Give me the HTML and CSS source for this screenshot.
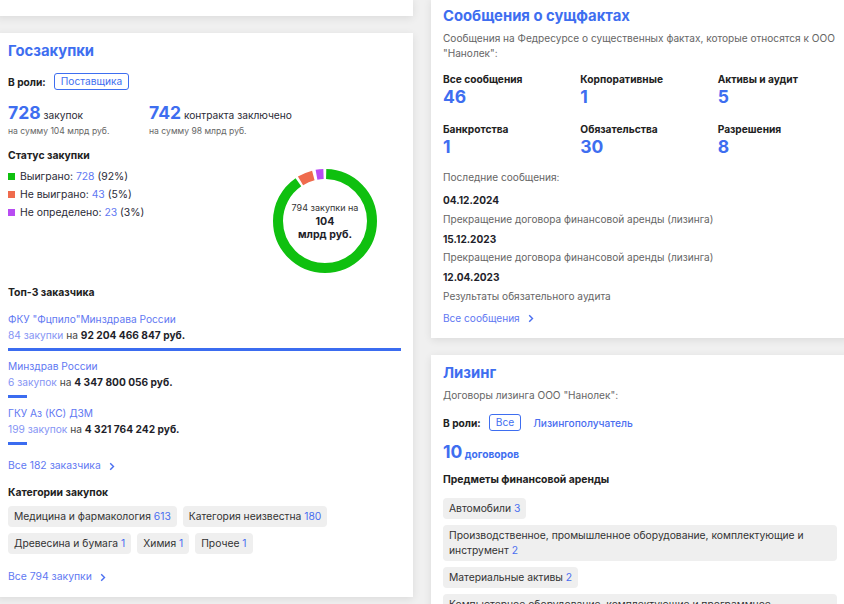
FILE: index.html
```html
<!DOCTYPE html>
<html lang="ru">
  <head>
    <meta charset="UTF-8" />
    <meta name="viewport" content="width=device-width, initial-scale=1.0" />
    <title>Нанолек</title>
    <link rel="stylesheet" href="styles.css">
  </head>
  <body>
    <main class="page">
      <div class="col col_left">
        <section class="card stub">
          <a class="peek" href="#">Все проверки</a>
        </section>

        <section class="card">
          <h2 class="card_title">Госзакупки</h2>
          <div class="role">
            <b>В роли:</b>
            <span class="badge">Поставщика</span>
          </div>
          <div class="stats">
            <div>
              <p class="stat"><span class="stat_num">728</span> закупок</p>
              <p class="stat_sub">на сумму 104 млрд руб.</p>
            </div>
            <div>
              <p class="stat"><span class="stat_num">742</span> контракта заключено</p>
              <p class="stat_sub">на сумму 98 млрд руб.</p>
            </div>
          </div>

          <div class="status">
            <div>
              <h3 class="subhead">Статус закупки</h3>
              <ul class="legend">
                <li><i class="sq sq_win"></i><span>Выиграно: <a href="#">728</a> (92%)</span></li>
                <li><i class="sq sq_lost"></i><span>Не выиграно: <a href="#">43</a> (5%)</span></li>
                <li><i class="sq sq_none"></i><span>Не определено: <a href="#">23</a> (3%)</span></li>
              </ul>
            </div>
            <div class="donut">
              <svg width="104" height="104" viewBox="0 0 104 104">
                <g transform="rotate(-90 52 52)" fill="none" stroke-width="10">
                  <circle cx="52" cy="52" r="47" stroke="#0fc00f" stroke-dasharray="265.4 295.3" stroke-dashoffset="-1.2" />
                  <circle cx="52" cy="52" r="47" stroke="#ef6b4d" stroke-dasharray="13.9 295.3" stroke-dashoffset="-269.1" />
                  <circle cx="52" cy="52" r="47" stroke="#b84cf2" stroke-dasharray="7 295.3" stroke-dashoffset="-286.3" />
                </g>
              </svg>
              <div class="donut_text">
                <span>794 закупки на</span>
                <b>104<br />млрд руб.</b>
              </div>
            </div>
          </div>

          <h3 class="subhead top3">Топ-3 заказчика</h3>
          <ul class="customers">
            <li>
              <a class="cust_name" href="#">ФКУ "Фцпило"Минздрава России</a>
              <p class="cust_sum"><a href="#">84 закупки</a> на <b>92 204 466 847 руб.</b></p>
              <div class="bar" style="width: 100%"></div>
            </li>
            <li>
              <a class="cust_name" href="#">Минздрав России</a>
              <p class="cust_sum"><a href="#">6 закупок</a> на <b>4 347 800 056 руб.</b></p>
              <div class="bar" style="width: 19px"></div>
            </li>
            <li>
              <a class="cust_name" href="#">ГКУ Аз (КС) ДЗМ</a>
              <p class="cust_sum"><a href="#">199 закупок</a> на <b>4 321 764 242 руб.</b></p>
              <div class="bar" style="width: 19px"></div>
            </li>
          </ul>
          <a class="more" href="#">Все 182 заказчика
            <svg width="6" height="9" viewBox="0 0 6 9"><path d="M1.2 1.2 4.5 4.5 1.2 7.8" /></svg>
          </a>

          <h3 class="subhead cats_head">Категории закупок</h3>
          <div class="chips">
            <span class="chip">Медицина и фармакология <em>613</em></span>
            <span class="chip">Категория неизвестна <em>180</em></span>
            <span class="chip">Древесина и бумага <em>1</em></span>
            <span class="chip">Химия <em>1</em></span>
            <span class="chip">Прочее <em>1</em></span>
          </div>
          <a class="more more_last" href="#">Все 794 закупки
            <svg width="6" height="9" viewBox="0 0 6 9"><path d="M1.2 1.2 4.5 4.5 1.2 7.8" /></svg>
          </a>
        </section>
      </div>

      <div class="col col_right">
        <section class="card">
          <h2 class="card_title">Сообщения о сущфактах</h2>
          <p class="desc">Сообщения на Федресурсе о существенных фактах, которые относятся к ООО "Нанолек":</p>
          <div class="facts">
            <div><p class="fact_label">Все сообщения</p><p class="fact_num">46</p></div>
            <div><p class="fact_label">Корпоративные</p><p class="fact_num">1</p></div>
            <div><p class="fact_label">Активы и аудит</p><p class="fact_num">5</p></div>
            <div><p class="fact_label">Банкротства</p><p class="fact_num">1</p></div>
            <div><p class="fact_label">Обязательства</p><p class="fact_num">30</p></div>
            <div><p class="fact_label">Разрешения</p><p class="fact_num">8</p></div>
          </div>
          <p class="desc last_head">Последние сообщения:</p>
          <ul class="messages">
            <li><b>04.12.2024</b><p class="desc">Прекращение договора финансовой аренды (лизинга)</p></li>
            <li><b>15.12.2023</b><p class="desc">Прекращение договора финансовой аренды (лизинга)</p></li>
            <li><b>12.04.2023</b><p class="desc">Результаты обязательного аудита</p></li>
          </ul>
          <a class="more more_msg" href="#">Все сообщения
            <svg width="6" height="9" viewBox="0 0 6 9"><path d="M1.2 1.2 4.5 4.5 1.2 7.8" /></svg>
          </a>
        </section>

        <section class="card">
          <h2 class="card_title">Лизинг</h2>
          <p class="desc">Договоры лизинга ООО "Нанолек":</p>
          <div class="role role_lease">
            <b>В роли:</b>
            <span class="badge">Все</span>
            <a class="role_link" href="#">Лизингополучатель</a>
          </div>
          <p class="lease_count"><span class="stat_num">10</span> договоров</p>
          <h3 class="subhead lease_head">Предметы финансовой аренды</h3>
          <div class="chips chips_col">
            <span class="chip">Автомобили <em>3</em></span>
            <span class="chip">Производственное, промышленное оборудование, комплектующие и инструмент <em>2</em></span>
            <span class="chip">Материальные активы <em>2</em></span>
            <span class="chip">Компьютерное оборудование, комплектующие и программное обеспечение <em>1</em></span>
          </div>
        </section>
      </div>
    </main>
  </body>
</html>
```

FILE: styles.css
```css
* {
  margin: 0;
  padding: 0;
  box-sizing: border-box;

  list-style-type: none;
  text-decoration: none;
  color: inherit;
}

body {
  overflow: hidden;
  height: 100vh;
  background-color: #f0f0f0;
  font-family: Inter, 'Noto Sans', sans-serif;
  font-size: 10.2px;
  color: #1f1f2b;
}

.page {
  display: grid;
  grid-template-columns: 417px 418px;
  gap: 18px;
  width: 853px;
  margin: -2px 0 0 -4px;
  align-items: start;
}

.col {
  display: flex;
  flex-direction: column;
  gap: 17px;
}

.card {
  padding: 8px 12px 12px;
  background-color: white;
  box-shadow: 0 2px 8px rgba(0, 0, 0, 0.09);
}

.stub {
  height: 18px;
  padding: 0 12px;
  overflow: hidden;
}
.peek {
  display: block;
  margin: -13px 0 0 34px;
  line-height: 16px;
  font-size: 11px;
  color: #5f78f2;
}

.card_title {
  font-size: 14.8px;
  line-height: 20px;
  font-weight: 700;
  color: #3e6ef0;
}

.desc {
  line-height: 15px;
  font-size: 10.1px;
  color: #666;
}
.card_title + .desc {
  margin-top: 5px;
}

/* role row */
.role {
  display: flex;
  align-items: center;
  gap: 8px;
  margin-top: 12px;
  height: 17px;

  & b {
    font-weight: 700;
    color: #222;
  }
}
.badge {
  height: 17px;
  padding: 0 6px;
  border: 1px solid #3e6ef0;
  border-radius: 3px;
  line-height: 15px;
  color: #3e6ef0;
}
.role_link {
  margin-left: 4px;
  color: #4a6ef0;
  font-weight: 500;
}
.role_lease {
  margin-top: 11px;
}

/* big numbers */
.stats {
  display: grid;
  grid-template-columns: 141px auto;
  margin-top: 13px;
}
.stat {
  line-height: 20px;
  font-size: 10.2px;
  color: #2a2a36;
}
.stat_num {
  font-size: 17.5px;
  font-weight: 700;
  color: #3e6ef0;
}
.stat_sub {
  line-height: 12px;
  font-size: 8.6px;
  color: #666;
}

.subhead {
  font-size: 10.4px;
  line-height: 14px;
  font-weight: 700;
  color: #222;
}

/* status + donut */
.status {
  display: flex;
  justify-content: space-between;
  margin-top: 12px;
}
.legend {
  margin-top: 4px;

  & li {
    display: flex;
    align-items: center;
    height: 18px;
    font-size: 10.4px;
    color: #2a2a36;
  }
  & a {
    color: #5f78f2;
  }
}
.sq {
  width: 7px;
  height: 7px;
  margin-right: 5px;
}
.sq_win {
  background: #0fc00f;
}
.sq_lost {
  background: #ef6b4d;
}
.sq_none {
  background: #b84cf2;
}

.donut {
  position: relative;
  width: 104px;
  height: 104px;
  margin: 20px 24px 0 0;
}
.donut_text {
  position: absolute;
  inset: 0;
  display: flex;
  flex-direction: column;
  justify-content: center;
  align-items: center;
  text-align: center;

  & span {
    font-size: 9px;
    line-height: 14px;
    color: #333;
  }
  & b {
    font-size: 10.6px;
    line-height: 13px;
    font-weight: 700;
    color: #1f1f2b;
  }
}

/* customers */
.top3 {
  margin-top: 13px;
}
.customers {
  margin-top: 11px;

  & li {
    margin-bottom: 7.5px;
  }
}
.cust_name {
  display: block;
  line-height: 16px;
  font-size: 10.2px;
  color: #5f78f2;
}
.cust_sum {
  line-height: 16px;
  font-size: 10.2px;
  color: #444;

  & a {
    color: #8594f4;
  }
  & b {
    font-weight: 700;
    color: #1f1f2b;
  }
}
.bar {
  height: 3px;
  margin-top: 4.5px;
  background: #3b6cf0;
}

.more {
  display: inline-flex;
  align-items: center;
  gap: 8px;
  line-height: 16px;
  font-size: 10.4px;
  color: #5f78f2;

  & svg {
    fill: none;
    stroke: #4a6ef0;
    stroke-width: 1.4;
  }
}
.customers + .more {
  margin-top: 6px;
}
.more_last {
  margin-top: 15px;
}

.cats_head {
  margin-top: 12px;
}

/* chips */
.chips {
  display: flex;
  flex-wrap: wrap;
  gap: 6px;
  margin-top: 6px;
}
.chip {
  padding: 3px 6px;
  border-radius: 4px;
  background: #efefef;
  line-height: 15px;
  font-size: 10.3px;
  color: #333;

  & em {
    font-style: normal;
    color: #4a6ef0;
  }
}
.chips_col {
  flex-direction: column;
  align-items: flex-start;
  margin-top: 11px;
}

/* facts */
.facts {
  display: grid;
  grid-template-columns: repeat(3, 1fr);
  gap: 14px 18px;
  margin-top: 11px;
}
.fact_label {
  line-height: 14px;
  font-weight: 700;
  color: #222;
}
.fact_num {
  line-height: 22px;
  font-size: 17.5px;
  font-weight: 700;
  color: #3e6ef0;
}

.last_head {
  margin-top: 11.5px;
}
.messages {
  margin-top: 8.5px;

  & li {
    margin-bottom: 5px;
  }
  & b {
    display: block;
    line-height: 14px;
    font-size: 10.1px;
    font-weight: 700;
    color: #1f1f2b;
  }
  & .desc {
    margin-top: 4.5px;
  }
}
.more_msg {
  margin-top: 1.5px;
  font-size: 10.1px;
}

/* leasing */
.lease_count {
  margin-top: 10px;
  line-height: 22px;
  font-weight: 700;
  color: #3e6ef0;

  & .stat_num {
    font-size: 17.5px;
  }
}
.lease_head {
  margin-top: 8px;
}
```
